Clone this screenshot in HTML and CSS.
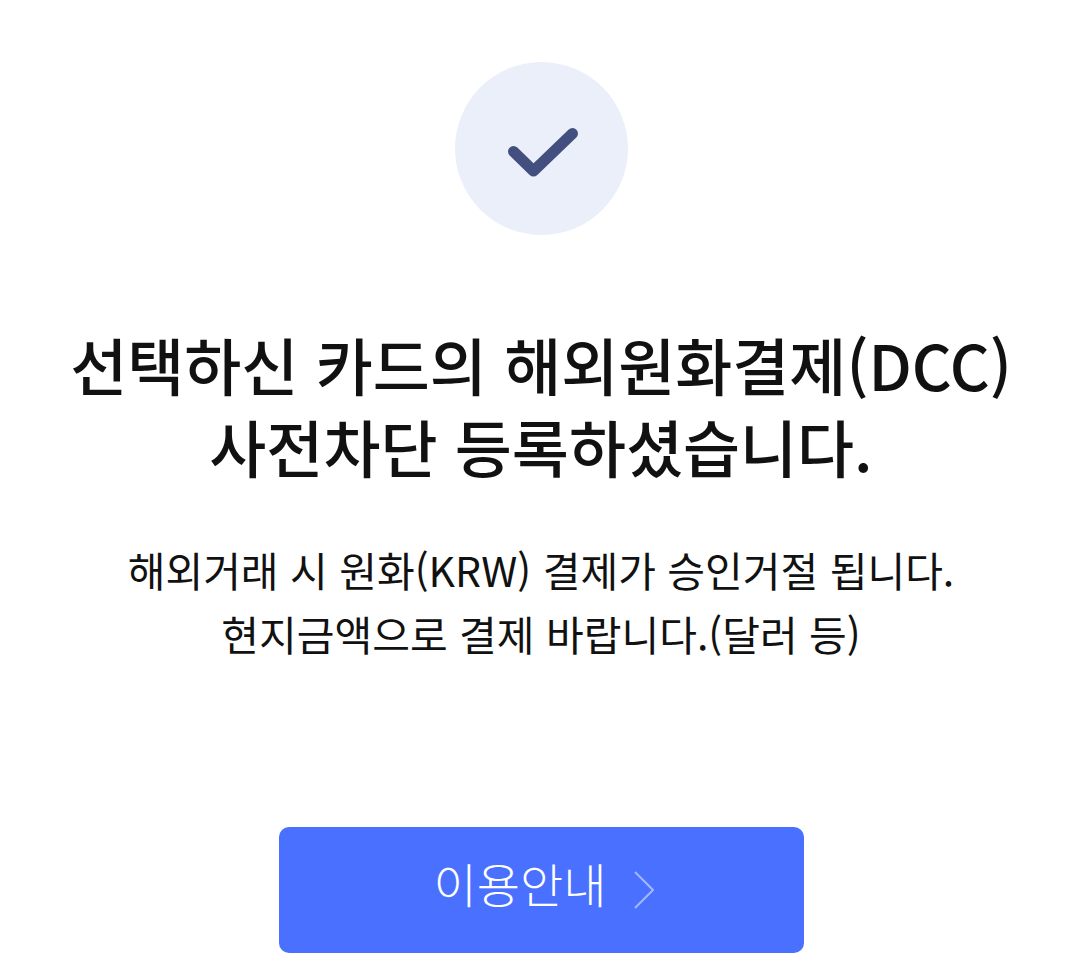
FILE: index.html
```html
<!DOCTYPE html>
<html lang="ko">
<head>
<meta charset="utf-8">
<meta name="viewport" content="width=device-width, initial-scale=1">
<title>해외원화결제(DCC) 사전차단</title>
<link rel="stylesheet" href="styles.css">
</head>
<body>
<main class="result">
  <div class="result-badge">
    <svg class="result-check" viewBox="0 0 173 173" aria-hidden="true"><path d="M58.500 89.500 L78.500 109 L117.500 71.500"/></svg>
  </div>
  <h1 class="result-title">선택하신 카드의 해외원화결제(DCC)<br>사전차단 등록하셨습니다.</h1>
  <p class="result-text">해외거래 시 원화(KRW) 결제가 승인거절 됩니다.<br>현지금액으로 결제 바랍니다.(달러 등)</p>
  <button class="guide-button" type="button">
    <span>이용안내</span>
    <svg class="guide-arrow" viewBox="0 0 20 38" aria-hidden="true"><path d="M1 1 L19 19 L1 37"/></svg>
  </button>
</main>
</body>
</html>
```

FILE: styles.css
```css
body {
  margin: 0;
  background: #fff;
  color: #111;
  font-family: "Noto Sans CJK KR", sans-serif;
}

.result {
  display: flex;
  flex-direction: column;
  align-items: center;
  padding: 62px 22px 6px 24px;
  text-align: center;
}

.result-badge {
  width: 173px;
  height: 173px;
  border-radius: 50%;
  background: #ebeff9;
}

.result-check {
  display: block;
  fill: none;
  stroke: #43507f;
  stroke-width: 11;
  stroke-linecap: round;
  stroke-linejoin: round;
}

.result-title {
  margin: 88px 0 0;
  font-size: 62px;
  font-weight: 500;
  line-height: 82px;
}

.result-text {
  margin: 50px 0 0;
  font-size: 41px;
  font-weight: 400;
  line-height: 64px;
}

.guide-button {
  display: flex;
  align-items: center;
  justify-content: center;
  gap: 28px;
  width: 525px;
  max-width: 100%;
  height: 126px;
  margin: 162px 0 0;
  padding: 0 0 0 6px;
  border: 0;
  border-radius: 10px;
  background: #4970ff;
  color: #fff;
  font-family: inherit;
  font-size: 47px;
  font-weight: 300;
  line-height: 60px;
}

.guide-button span {
  padding-bottom: 14px;
}

.guide-arrow {
  width: 20px;
  height: 38px;
  fill: none;
  stroke: #a3b7ff;
  stroke-width: 2;
}
```
